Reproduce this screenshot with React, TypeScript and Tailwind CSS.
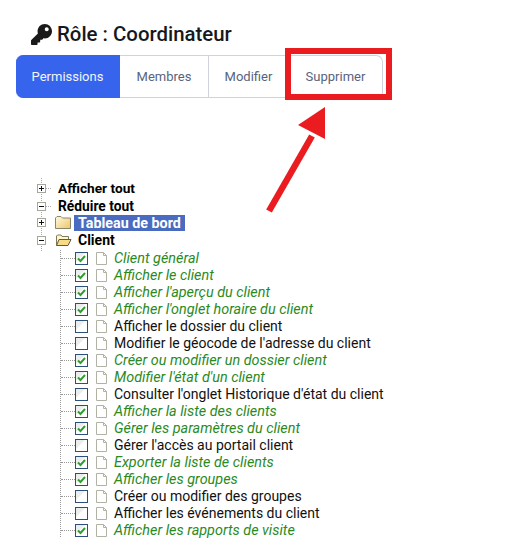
const items: [string, boolean][] = [
  ["Client général", true],
  ["Afficher le client", true],
  ["Afficher l'aperçu du client", true],
  ["Afficher l'onglet horaire du client", true],
  ["Afficher le dossier du client", false],
  ["Modifier le géocode de l'adresse du client", false],
  ["Créer ou modifier un dossier client", true],
  ["Modifier l'état d'un client", true],
  ["Consulter l'onglet Historique d'état du client", false],
  ["Afficher la liste des clients", true],
  ["Gérer les paramètres du client", true],
  ["Gérer l'accès au portail client", false],
  ["Exporter la liste de clients", true],
  ["Afficher les groupes", true],
  ["Créer ou modifier des groupes", false],
  ["Afficher les événements du client", false],
  ["Afficher les rapports de visite", true],
];

function Expander({ open, connector = true }: { open: boolean; connector?: boolean }) {
  return (
    <svg width="15" height="19" viewBox="0 0 15 19" className="shrink-0 overflow-visible">
      <path d="M4.5 -1V20" stroke="#aaa" strokeDasharray="1 1" />
      {connector && <path d="M9 9.500h6" stroke="#aaa" strokeDasharray="1 1" />}
      <rect x="0.500" y="5.500" width="8" height="8" fill="#fff" stroke="#a6a69c" />
      <path d="M2 9.500h5" stroke="#111" />
      {!open && <path d="M4.500 7v5" stroke="#111" />}
    </svg>
  );
}

function Folder({ open }: { open: boolean }) {
  return open ? (
    <svg width="17" height="13" viewBox="0 0 17 13" className="shrink-0">
      <path d="M1.500 11.500V2l1-1h3.500l1 1.500h6.500v3" fill="#fff6cc" stroke="#7d7a5c" />
      <path d="M1.500 11.500l2.500-6h12l-3 6z" fill="#f7dc85" stroke="#5f5c44" />
    </svg>
  ) : (
    <svg width="16" height="13" viewBox="0 0 16 13" className="shrink-0">
      <defs>
        <linearGradient id="fld" x1="0" y1="0" x2="1" y2="1">
          <stop offset="0" stopColor="#fffbe0" />
          <stop offset="1" stopColor="#ecc568" />
        </linearGradient>
      </defs>
      <path d="M0.500 12.500V2l1.500-1.500h4L7.500 2h8v10.500z" fill="url(#fld)" stroke="#8a8668" />
    </svg>
  );
}

function Page() {
  return (
    <svg width="12" height="13" viewBox="0 0 12 13" className="shrink-0">
      <path d="M0.500 0.500h7l3 3v9h-10z M7.500 0.500v3h3" fill="#fff" stroke="#b2b2a4" />
    </svg>
  );
}

function Check({ on }: { on: boolean }) {
  return (
    <svg width="13" height="13" viewBox="0 0 13 13" className="shrink-0">
      <rect x="0.500" y="0.500" width="12" height="12" fill="#fff" stroke="#2f4f7b" />
      <path d="M1 1h9l-9 9z" fill="#eceeee" />
      {on && <path d="M3 6.500l2.500 2.500 4.500-5" fill="none" stroke="#2f9e2f" strokeWidth="2" />}
    </svg>
  );
}

function Tab({ label, active, cls }: { label: string; active?: boolean; cls: string }) {
  return (
    <div
      className={`flex items-center justify-center h-[43px] text-[13px] border-y border-r ${cls} ${
        active ? "bg-[#3764ec] text-[#f2f5ff] border-[#3764ec]" : "bg-white text-[#56657c] border-[#d0d3de]"
      }`}
    >
      {label}
    </div>
  );
}

export default function App() {
  return (
    <div className="relative w-[520px] h-[538px] overflow-hidden bg-white font-['Roboto',sans-serif] text-black">
      <div className="flex items-center gap-[5px] pl-[31px] pt-[22px] h-[55px] pb-[9px]">
        <svg width="21" height="21" viewBox="0 0 512 512" className="shrink-0" fill="#1a1a1a">
          <path d="M512 176c0 97-79 176-176 176-11 0-22-1-33-3l-24 27c-5 5-11 8-18 8h-37v40c0 13-11 24-24 24h-40v40c0 13-11 24-24 24H24c-13 0-24-11-24-24v-78c0-6 3-12 7-17l162-162c-6-18-9-37-9-55C160 79 239 0 336 0s176 79 176 176zm-176-48c0 27 21 48 48 48s48-21 48-48-21-48-48-48-48 21-48 48z" />
        </svg>
        <span className="text-[20.4px] font-medium text-[#18181b] leading-none">Rôle : Coordinateur</span>
      </div>

      <div className="flex pl-[16px]">
        <Tab label="Permissions" active cls="w-[104px] rounded-l-[7px]" />
        <Tab label="Membres" cls="w-[89px]" />
        <Tab label="Modifier" cls="w-[80px]" />
        <Tab label="Supprimer" cls="w-[94px] rounded-tr-[7px]" />
      </div>

      <div className="pl-[37px] pt-[81px] text-[14px] leading-[17px]">
        <div className="flex items-center h-[18px]">
          <Expander open={false} />
          <span className="ml-[6px] font-bold text-[13.7px]">Afficher tout</span>
        </div>
        <div className="flex items-center h-[17px] mt-[1px]">
          <Expander open />
          <span className="ml-[6px] font-bold text-[13.8px]">Réduire tout</span>
        </div>
        <div className="flex items-center h-[17px] -mt-px">
          <Expander open={false} connector={false} />
          <span className="w-[3px]" />
          <Folder open={false} />
          <span className="ml-[3px] px-[4px] bg-[#4a6cc0] text-white font-bold text-[14.3px] leading-[16px]">Tableau de bord</span>
        </div>
        <div className="flex items-center h-[17px] mt-[1px]">
          <Expander open connector={false} />
          <span className="w-[3px]" />
          <Folder open />
          <span className="ml-[6px] font-bold">Client</span>
        </div>
        <div className="ml-[23px] mt-[1px] border-l border-dotted border-[#999]">
          {items.map(([label, on]) => (
            <div key={label} className="flex items-center h-[17px]">
              <span className="w-[14px] border-t border-dotted border-[#999]" />
              <Check on={on} />
              <span className="w-[8px]" />
              <Page />
              <span
                className={`ml-[6px] whitespace-nowrap ${on ? "italic text-[14.4px] text-[#2a8a1e]" : "text-[#111]"}`}
              >
                {label}
              </span>
            </div>
          ))}
        </div>
      </div>

      <div className="absolute left-[285px] top-[48px] w-[107px] h-[52px] border-[6px] border-[#ea1c20]" />
      <svg className="absolute left-[260px] top-[100px]" width="80" height="115" viewBox="0 0 80 115">
        <path d="M9 111L52 36" stroke="#ea1c20" strokeWidth="6.500" fill="none" />
        <path d="M65 7L38 25L65 39z" fill="#ea1c20" />
      </svg>
    </div>
  );
}
